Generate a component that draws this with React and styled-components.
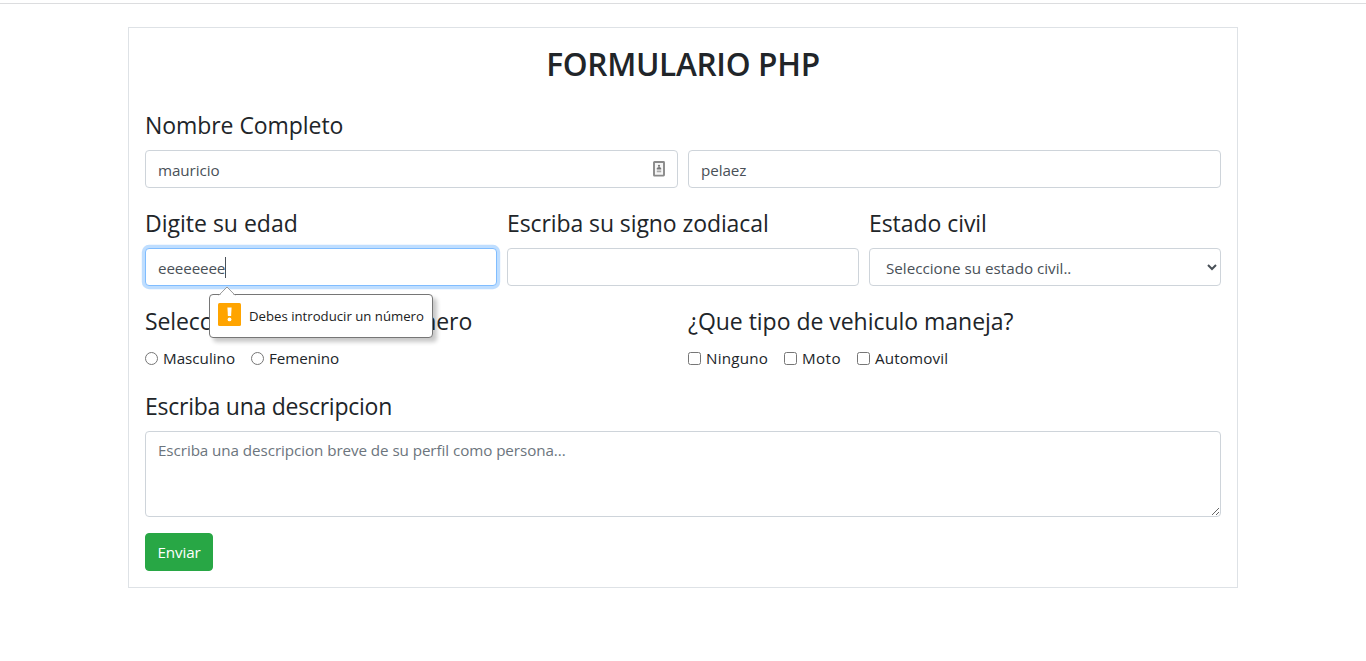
import React from "react";
import styled, { createGlobalStyle, css } from "styled-components";

const Global = createGlobalStyle`
  *, *::before, *::after { box-sizing: border-box; }
  body {
    margin: 0;
    background: #fff;
    color: #212529;
    font-family: "Open Sans", sans-serif;
    font-size: 15.2px;
    line-height: 24px;
  }
`;

const Page = styled.div`
  padding-top: 3px;
`;

const TopRule = styled.div`
  height: 1px;
  margin-bottom: 23px;
  background: #dcdddf;
`;

const Panel = styled.form`
  width: 1110px;
  margin: 0 auto;
  padding: 16px;
  border: 1px solid #dee2e6;
`;

const Title = styled.h2`
  margin: 0 0 24px;
  padding-top: 2px;
  font-size: 31.6px;
  font-weight: 600;
  line-height: 36.4px;
  letter-spacing: -0.32px;
  text-align: center;
`;

const Row = styled.div`
  display: flex;
  gap: 10px;
`;

const Group = styled.div`
  flex: 1 1 0;
  min-width: 0;
  margin-bottom: ${(p) => p.$bottom ?? 16}px;
`;

const Heading = styled.label`
  display: block;
  margin-bottom: 8px;
  padding-top: 2px;
  font-size: 23px;
  line-height: 34px;
  white-space: nowrap;
  letter-spacing: ${(p) => p.$track ?? 0}px;
`;

const control = css`
  display: block;
  width: 100%;
  height: 38px;
  margin: 0;
  padding: 7px 12px 5px;
  border: 1px solid #ced4da;
  border-radius: 4px;
  background-color: #fff;
  color: #495057;
  font: inherit;
  line-height: 24px;
  outline: 0;
`;

const Input = styled.input`
  ${control}
  letter-spacing: -0.08px;
`;

const Select = styled.select`
  ${control}
`;

const TextArea = styled.textarea`
  ${control}
  height: 86px;
  padding: 6px 12px;
  letter-spacing: -0.07px;
  resize: vertical;
  &::placeholder { color: #6c757d; }
`;

const FieldWrap = styled.div`
  position: relative;
`;

const ContactIcon = styled.svg`
  position: absolute;
  top: 11px;
  right: 13px;
`;

const FocusedInput = styled.div`
  ${control}
  display: flex;
  align-items: center;
  border-color: #80bdff;
  box-shadow: 0 0 0 3.2px rgba(0, 123, 255, 0.25);
  letter-spacing: -0.12px;
`;

const Caret = styled.span`
  width: 1px;
  height: 21px;
  margin-top: -1px;
  background: #495057;
`;

const Tooltip = styled.div`
  position: absolute;
  z-index: 2;
  top: 46px;
  left: 64px;
  display: flex;
  align-items: center;
  width: 224px;
  height: 44px;
  padding: 0 8px 3px;
  border: 1px solid #767676;
  border-radius: 4px;
  background: #fff;
  box-shadow: 4px 4px 4px rgba(0, 0, 0, 0.22);
  color: #212121;
  font-size: 13.2px;
  white-space: nowrap;
`;

const TooltipArrow = styled.svg`
  position: absolute;
  top: -9px;
  left: 8px;
`;

const WarningIcon = styled.svg`
  flex: none;
  margin-right: 8px;
`;

const TooltipText = styled.span`
  padding-top: 2px;
`;

const Options = styled.div`
  display: flex;
  gap: 16px;
`;

const OptionLabel = styled.label`
  display: flex;
  align-items: center;
  gap: 5px;
  height: 24px;
  letter-spacing: ${(p) => p.$track ?? 0}px;
`;

const OptionInput = styled.input`
  flex: none;
  width: 13px;
  height: 13px;
  margin: 0;
`;

const Submit = styled.button`
  display: block;
  width: 68px;
  height: 38px;
  padding: 0 0 1px;
  border: 1px solid #28a745;
  border-radius: 4px;
  background: #28a745;
  color: #fff;
  font: inherit;
  letter-spacing: -0.1px;
`;

function Option({ type, name, text, track }) {
  return (
    <OptionLabel $track={track}>
      <OptionInput type={type} name={name} />
      {text}
    </OptionLabel>
  );
}

export default function App() {
  return (
    <Page>
      <Global />
      <TopRule />
      <Panel>
        <Title>FORMULARIO PHP</Title>

        <Heading $track={-0.06}>Nombre Completo</Heading>
        <Row>
          <Group>
            <FieldWrap>
              <Input defaultValue="mauricio" />
              <ContactIcon width="12" height="16" viewBox="0 0 12 16">
                <rect x="1" y="1" width="10" height="13.6" rx="0.5" fill="#f6f6f6" stroke="#8a8a8a" strokeWidth="1.9" />
                <circle cx="6" cy="4.8" r="1.1" fill="#777" />
                <path d="M3.8 8.4V7.6Q4 6.2 6 6T8.2 7.6V8.4Z" fill="#777" />
                <path d="M3.8 10.4H8.2" stroke="#aaa" strokeWidth="1.8" />
              </ContactIcon>
            </FieldWrap>
          </Group>
          <Group>
            <Input defaultValue="pelaez" />
          </Group>
        </Row>

        <Row>
          <Group>
            <Heading>Digite su edad</Heading>
            <FieldWrap>
              <FocusedInput>
                eeeeeeee
                <Caret />
              </FocusedInput>
              <Tooltip>
                <TooltipArrow width="18" height="10" viewBox="0 0 18 10">
                  <path d="M1 10L9 1.2L17 10Z" fill="#fff" />
                  <path d="M0.8 9.3L9 1L17.2 9.3" fill="none" stroke="#999" />
                </TooltipArrow>
                <WarningIcon width="23" height="23" viewBox="0 0 23 23">
                  <rect width="23" height="23" rx="1.5" fill="#ffa400" />
                  <path d="M9.4 4.5H13.6L13.1 13H9.9Z" fill="#fff" />
                  <circle cx="11.5" cy="16.4" r="1.9" fill="#fff" />
                </WarningIcon>
                <TooltipText>Debes introducir un número</TooltipText>
              </Tooltip>
            </FieldWrap>
          </Group>
          <Group>
            <Heading $track={-0.09}>Escriba su signo zodiacal</Heading>
            <Input />
          </Group>
          <Group>
            <Heading $track={-0.06}>Estado civil</Heading>
            <Select>
              <option>Seleccione su estado civil..</option>
            </Select>
          </Group>
        </Row>

        <Row>
          <Group $bottom={17}>
            <Heading $track={-0.1}>Seleccione por favor su genero</Heading>
            <Options>
              <Option type="radio" name="genero" text="Masculino" />
              <Option type="radio" name="genero" text="Femenino" track={-0.08} />
            </Options>
          </Group>
          <Group $bottom={17}>
            <Heading $track={-0.03}>¿Que tipo de vehiculo maneja?</Heading>
            <Options>
              <Option type="checkbox" name="vehiculo" text="Ninguno" track={0.2} />
              <Option type="checkbox" name="vehiculo" text="Moto" track={0.4} />
              <Option type="checkbox" name="vehiculo" text="Automovil" track={0.14} />
            </Options>
          </Group>
        </Row>

        <Group>
          <Heading $track={-0.25}>Escriba una descripcion</Heading>
          <TextArea placeholder="Escriba una descripcion breve de su perfil como persona..." />
        </Group>

        <Submit type="button">Enviar</Submit>
      </Panel>
    </Page>
  );
}
